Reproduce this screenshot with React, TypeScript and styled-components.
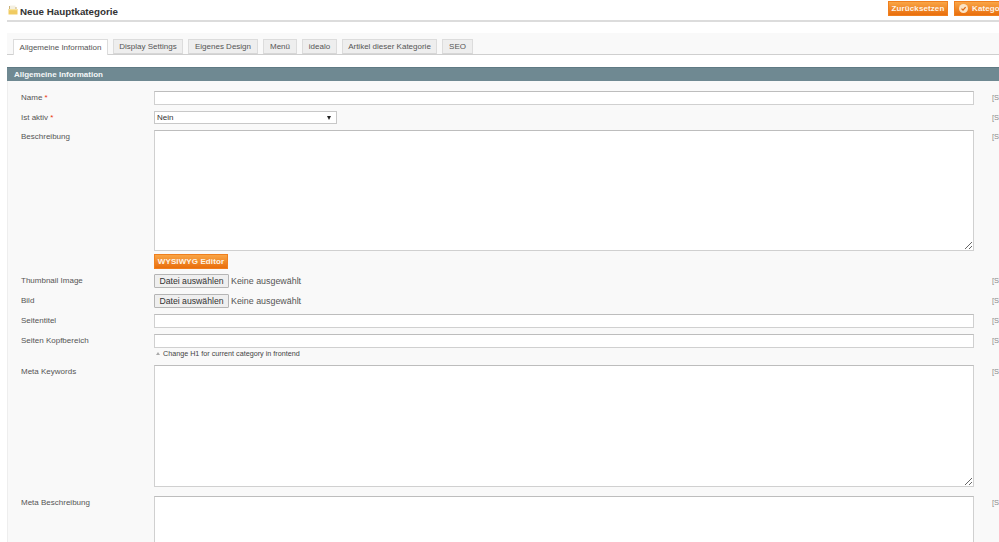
import styled, { createGlobalStyle } from "styled-components";

const GlobalStyle = createGlobalStyle`
  html, body {
    margin: 0;
    padding: 0;
    background: #fff;
    overflow: hidden;
  }
  #root {
    width: 999px;
    height: 542px;
    overflow: hidden;
  }
`;

const Page = styled.div`
  width: 1100px;
  font-family: "Liberation Sans", Arial, sans-serif;
  font-size: 8px;
  color: #444;
`;

const ContentHeader = styled.header`
  display: flex;
  justify-content: space-between;
  align-items: flex-start;
  height: 19px;
  margin: 0 0 0 7px;
  padding-top: 1px;
  border-bottom: 2px solid #dcdcdc;
`;

const TitleWrap = styled.div`
  display: flex;
  align-items: center;
  gap: 2px;
  height: 17px;
  padding-top: 2px;
`;

const TitleIcon = styled.svg`
  margin: -3px 0 0 1px;
`;

const Title = styled.h1`
  margin: 0;
  font-size: 9.8px;
  font-weight: bold;
  color: #333;
`;

const HeaderActions = styled.div`
  display: flex;
  gap: 6px;
  width: 212px;
`;

const OrangeButton = styled.button<{ $wide?: boolean }>`
  display: inline-flex;
  align-items: center;
  justify-content: center;
  gap: 4px;
  flex-shrink: 0;
  height: 15px;
  padding: 0;
  width: ${(p) => (p.$wide ? "146px" : "60px")};
  border: 1px solid #ef7f1e;
  background: linear-gradient(#f9a546, #e96e0c);
  color: #fdf3e6;
  font-family: inherit;
  font-size: 8px;
  font-weight: bold;
  letter-spacing: 0.1px;
  white-space: nowrap;
`;

const SaveLabel = styled.span`
  flex: 1;
  text-align: left;
`;

const SaveIcon = styled.svg`
  margin-left: 4px;
`;

const TabBar = styled.nav`
  display: flex;
  align-items: flex-end;
  gap: 5px;
  height: 21px;
  margin: 11px 0 0 7px;
  padding-left: 6px;
  background: #f9f9f9;
  border-bottom: 1px solid #cfcfcf;
`;

const Tab = styled.div<{ $active?: boolean; $w: number }>`
  display: flex;
  align-items: center;
  justify-content: center;
  box-sizing: border-box;
  width: ${(p) => p.$w}px;
  height: ${(p) => (p.$active ? "16px" : "15px")};
  margin-bottom: ${(p) => (p.$active ? "-1px" : "0")};
  border: 1px solid #dcdcdc;
  border-bottom: ${(p) => (p.$active ? "none" : "1px solid #d6d6d6")};
  background: ${(p) => (p.$active ? "#fff" : "#eeeeee")};
  color: #555;
  font-size: 8px;
  white-space: nowrap;
`;

const Panel = styled.section`
  margin: 12px 0 0 7px;
  background: #f9f9f9;
  border-left: 1px solid #eeeeee;
`;

const PanelHead = styled.h2`
  height: 14px;
  margin: 0 0 0 -1px;
  padding-left: 7px;
  background: #6f8992;
  border-top: 1px solid #5f7a84;
  box-sizing: border-box;
  color: #f4f7f8;
  font-size: 8px;
  font-weight: bold;
  line-height: 13px;
`;

const Form = styled.div`
  padding-top: 10px;
  height: 600px;
`;

const Row = styled.div<{ $gap: number }>`
  display: grid;
  grid-template-columns: 133px 820px 1fr;
  margin-bottom: ${(p) => p.$gap}px;
  padding-left: 13px;
`;

const Label = styled.label`
  padding-top: 1px;
  line-height: 11px;
  color: #555;
  font-size: 8px;
`;

const Required = styled.span`
  color: #eb340a;
`;

const Scope = styled.span`
  padding-left: 18px;
  line-height: 11px;
  padding-top: 1px;
  color: #8b8b8b;
  font-size: 7.5px;
  white-space: nowrap;
`;

const TextInput = styled.input`
  display: block;
  box-sizing: border-box;
  width: 820px;
  height: 14px;
  margin: 0;
  padding: 0 2px;
  background: #fff;
  border: 1px solid #d0d0d0;
  border-top-color: #bdbdbd;
`;

const SelectBox = styled.div`
  display: flex;
  align-items: center;
  justify-content: space-between;
  box-sizing: border-box;
  width: 183px;
  height: 13px;
  padding: 0 5px 0 2px;
  background: #fff;
  border: 1px solid #c8c8c8;
  color: #333;
  font-size: 8px;
`;

const Caret = styled.span`
  width: 0;
  height: 0;
  border-left: 2.5px solid transparent;
  border-right: 2.5px solid transparent;
  border-top: 4px solid #222;
`;

const TextArea = styled.textarea<{ $h: number }>`
  display: block;
  box-sizing: border-box;
  width: 820px;
  height: ${(p) => p.$h}px;
  margin: 0;
  padding: 0;
  background: #fff;
  border: 1px solid #d0d0d0;
  border-top-color: #bdbdbd;
  resize: vertical;
`;

const WysiwygButton = styled(OrangeButton)`
  width: 74px;
  margin-top: 3px;
  display: flex;
`;

const FileField = styled.div`
  display: flex;
  align-items: center;
  gap: 2px;
  height: 14px;
  font-size: 8.9px;
  color: #555;
`;

const FileButton = styled.div`
  display: flex;
  align-items: center;
  justify-content: center;
  box-sizing: border-box;
  width: 75px;
  height: 14px;
  background: #efefef;
  border: 1px solid #b5b5b5;
  border-radius: 1px;
  color: #333;
  font-size: 8.7px;
`;

const Note = styled.p`
  display: flex;
  align-items: center;
  gap: 3px;
  margin: 1px 0 0 2px;
  height: 9px;
  color: #444;
  font-size: 7.2px;
`;

const NoteArrow = styled.span`
  width: 0;
  height: 0;
  border-left: 2px solid transparent;
  border-right: 2px solid transparent;
  border-bottom: 3px solid #aaa;
`;

const tabs = [
  { name: "Allgemeine Information", w: 95, active: true },
  { name: "Display Settings", w: 70 },
  { name: "Eigenes Design", w: 70 },
  { name: "Menü", w: 34 },
  { name: "idealo", w: 35 },
  { name: "Artikel dieser Kategorie", w: 95 },
  { name: "SEO", w: 31 },
];

const SCOPE = "[STORE VIEW]";

function FolderIcon() {
  return (
    <TitleIcon width="10" height="10" viewBox="0 0 10 10">
      <path d="M1 2.5V1h3l1 1h3.5v2.5H1z" fill="#c9b27c" />
      <path d="M2 .5h5.5V4H2z" fill="#f4f0e2" />
      <path d="M0.5 4h9v5.5h-9z" fill="#f0cb62" />
      <path d="M0.5 4h9v1.2h-9z" fill="#f8e39c" />
    </TitleIcon>
  );
}

function CheckIcon() {
  return (
    <SaveIcon width="9" height="9" viewBox="0 0 9 9">
      <circle cx="4.5" cy="4.5" r="4.5" fill="#fbe3c4" />
      <path d="M2.5 4.6l1.5 1.5 2.6-3" fill="none" stroke="#d9670f" strokeWidth="1.3" />
    </SaveIcon>
  );
}

function App() {
  return (
    <Page>
      <GlobalStyle />
      <ContentHeader>
        <TitleWrap>
          <FolderIcon />
          <Title>Neue Hauptkategorie</Title>
        </TitleWrap>
        <HeaderActions>
          <OrangeButton>Zurücksetzen</OrangeButton>
          <OrangeButton $wide>
            <CheckIcon />
            <SaveLabel>Kategorie speichern</SaveLabel>
          </OrangeButton>
        </HeaderActions>
      </ContentHeader>

      <TabBar>
        {tabs.map((tab) => (
          <Tab key={tab.name} $w={tab.w} $active={tab.active}>
            {tab.name}
          </Tab>
        ))}
      </TabBar>

      <Panel>
        <PanelHead>Allgemeine Information</PanelHead>
        <Form>
          <Row $gap={6}>
            <Label>Name <Required>*</Required></Label>
            <TextInput />
            <Scope>{SCOPE}</Scope>
          </Row>
          <Row $gap={6}>
            <Label>Ist aktiv <Required>*</Required></Label>
            <SelectBox>
              Nein
              <Caret />
            </SelectBox>
            <Scope>{SCOPE}</Scope>
          </Row>
          <Row $gap={5}>
            <Label>Beschreibung</Label>
            <div>
              <TextArea $h={121} />
              <WysiwygButton>WYSIWYG Editor</WysiwygButton>
            </div>
            <Scope>{SCOPE}</Scope>
          </Row>
          <Row $gap={6}>
            <Label>Thumbnail Image</Label>
            <FileField>
              <FileButton>Datei auswählen</FileButton>
              Keine ausgewählt
            </FileField>
            <Scope>{SCOPE}</Scope>
          </Row>
          <Row $gap={6}>
            <Label>Bild</Label>
            <FileField>
              <FileButton>Datei auswählen</FileButton>
              Keine ausgewählt
            </FileField>
            <Scope>{SCOPE}</Scope>
          </Row>
          <Row $gap={6}>
            <Label>Seitentitel</Label>
            <TextInput />
            <Scope>{SCOPE}</Scope>
          </Row>
          <Row $gap={7}>
            <Label>Seiten Kopfbereich</Label>
            <div>
              <TextInput />
              <Note>
                <NoteArrow />
                Change H1 for current category in frontend
              </Note>
            </div>
            <Scope>{SCOPE}</Scope>
          </Row>
          <Row $gap={9}>
            <Label>Meta Keywords</Label>
            <TextArea $h={122} />
            <Scope>{SCOPE}</Scope>
          </Row>
          <Row $gap={6}>
            <Label>Meta Beschreibung</Label>
            <TextArea $h={122} />
            <Scope>{SCOPE}</Scope>
          </Row>
        </Form>
      </Panel>
    </Page>
  );
}

export default App;
